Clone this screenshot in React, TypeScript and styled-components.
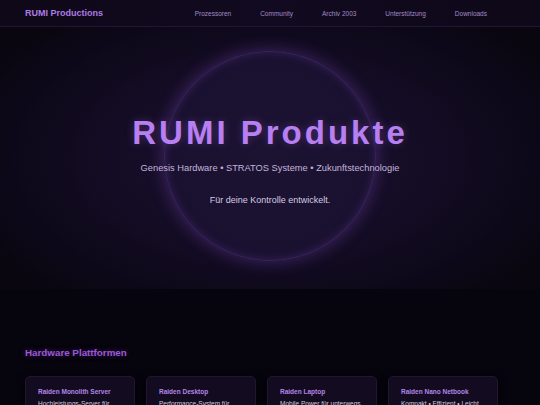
import React from 'react';
import styled, { createGlobalStyle } from 'styled-components';

const GlobalStyle = createGlobalStyle`
  * { box-sizing: border-box; }
  html, body {
    margin: 0;
    padding: 0;
    background: #06040c;
    font-family: "Liberation Sans", Arial, sans-serif;
  }
`;

const navItems = ['Prozessoren', 'Community', 'Archiv 2003', 'Unterstützung', 'Downloads'];

const platforms = [
  { name: 'Raiden Monolith Server', text: 'Hochleistungs-Server für Rechenzentren' },
  { name: 'Raiden Desktop', text: 'Performance-System für Arbeit und Spiel' },
  { name: 'Raiden Laptop', text: 'Mobile Power für unterwegs' },
  { name: 'Raiden Nano Netbook', text: 'Kompakt • Effizient • Leicht' },
];

const App: React.FC = () => {
  return (
    <StRoot>
      <GlobalStyle />
      <StHeader>
        <StLogo>RUMI Productions</StLogo>
        <StNav>
          {navItems.map((item) => (
            <StNavLink key={item} href="#">
              {item}
            </StNavLink>
          ))}
        </StNav>
      </StHeader>
      <StHero>
        <StOrb />
        <StHeroContent>
          <StTitle>RUMI Produkte</StTitle>
          <StSubtitle>Genesis Hardware • STRATOS Systeme • Zukunftstechnologie</StSubtitle>
          <StTagline>Für deine Kontrolle entwickelt.</StTagline>
        </StHeroContent>
      </StHero>
      <StSection>
        <StSectionTitle>Hardware Plattformen</StSectionTitle>
        <StGrid>
          {platforms.map((p) => (
            <StCard key={p.name}>
              <StCardTitle>{p.name}</StCardTitle>
              <StCardText>{p.text}</StCardText>
            </StCard>
          ))}
        </StGrid>
      </StSection>
    </StRoot>
  );
};

export default App;

const StRoot = styled.div`
  height: 405px;
  background: #06040c;
  overflow: hidden;
`;

const StHeader = styled.header`
  height: 27px;
  display: flex;
  align-items: center;
  justify-content: space-between;
  padding: 0 53px 0 25px;
  background: linear-gradient(90deg, #0e0818 0%, #120a20 50%, #0e0818 100%);
  border-bottom: 1px solid #22153a;
`;

const StLogo = styled.div`
  font-size: 9px;
  font-weight: 700;
  color: #ad7ce4;
`;

const StNav = styled.nav`
  display: flex;
  gap: 29px;
`;

const StNavLink = styled.a`
  font-size: 6.5px;
  color: #a28cc4;
  text-decoration: none;
`;

const StHero = styled.section`
  position: relative;
  height: 262px;
  display: flex;
  align-items: center;
  justify-content: center;
  background: radial-gradient(ellipse 60% 70% at 50% 50%, #1b1131 0%, #150d26 45%, #0d0819 80%, #09060f 100%);
`;

const StOrb = styled.div`
  position: absolute;
  left: 50%;
  top: 50%;
  width: 212px;
  height: 210px;
  margin: -107px 0 0 -106px;
  border-radius: 50%;
  background: radial-gradient(circle at 50% 50%, #1c1232 0%, #1a1130 70%, #1e1337 100%);
  box-shadow: 0 0 16px 2px rgba(150, 90, 230, 0.28), inset 0 0 10px rgba(160, 100, 240, 0.2);
  border: 1px solid rgba(140, 90, 210, 0.25);
`;

const StHeroContent = styled.div`
  position: relative;
  display: flex;
  flex-direction: column;
  align-items: center;
  margin-top: 2px;
`;

const StTitle = styled.h1`
  margin: 0;
  font-size: 33px;
  font-weight: 700;
  letter-spacing: 3px;
  color: #b87ff2;
  text-shadow: 0 0 8px rgba(192, 132, 252, 0.25);
`;

const StSubtitle = styled.p`
  margin: 11px 0 0;
  font-size: 9.3px;
  color: #c2b5da;
`;

const StTagline = styled.p`
  margin: 22px 0 0;
  font-size: 9px;
  color: #d4cae4;
`;

const StSection = styled.section`
  padding: 58px 25px 0;
`;

const StSectionTitle = styled.h2`
  margin: 0;
  font-size: 9.8px;
  font-weight: 700;
  color: #9b58d8;
  text-shadow: 0 0 6px rgba(155, 88, 216, 0.4);
`;

const StGrid = styled.div`
  display: grid;
  grid-template-columns: repeat(4, 110px);
  gap: 11px;
  margin-top: 18px;
`;

const StCard = styled.div`
  height: 90px;
  padding: 11px 12px;
  border-radius: 5px;
  background: #130c20;
  border: 1px solid #21152f;
  box-shadow: 0 2px 8px rgba(0, 0, 0, 0.5);
`;

const StCardTitle = styled.h3`
  margin: 0;
  font-size: 6.5px;
  font-weight: 700;
  color: #b584e8;
`;

const StCardText = styled.p`
  margin: 4px 0 0;
  font-size: 6.5px;
  line-height: 9px;
  color: #d0c8dc;
`;
